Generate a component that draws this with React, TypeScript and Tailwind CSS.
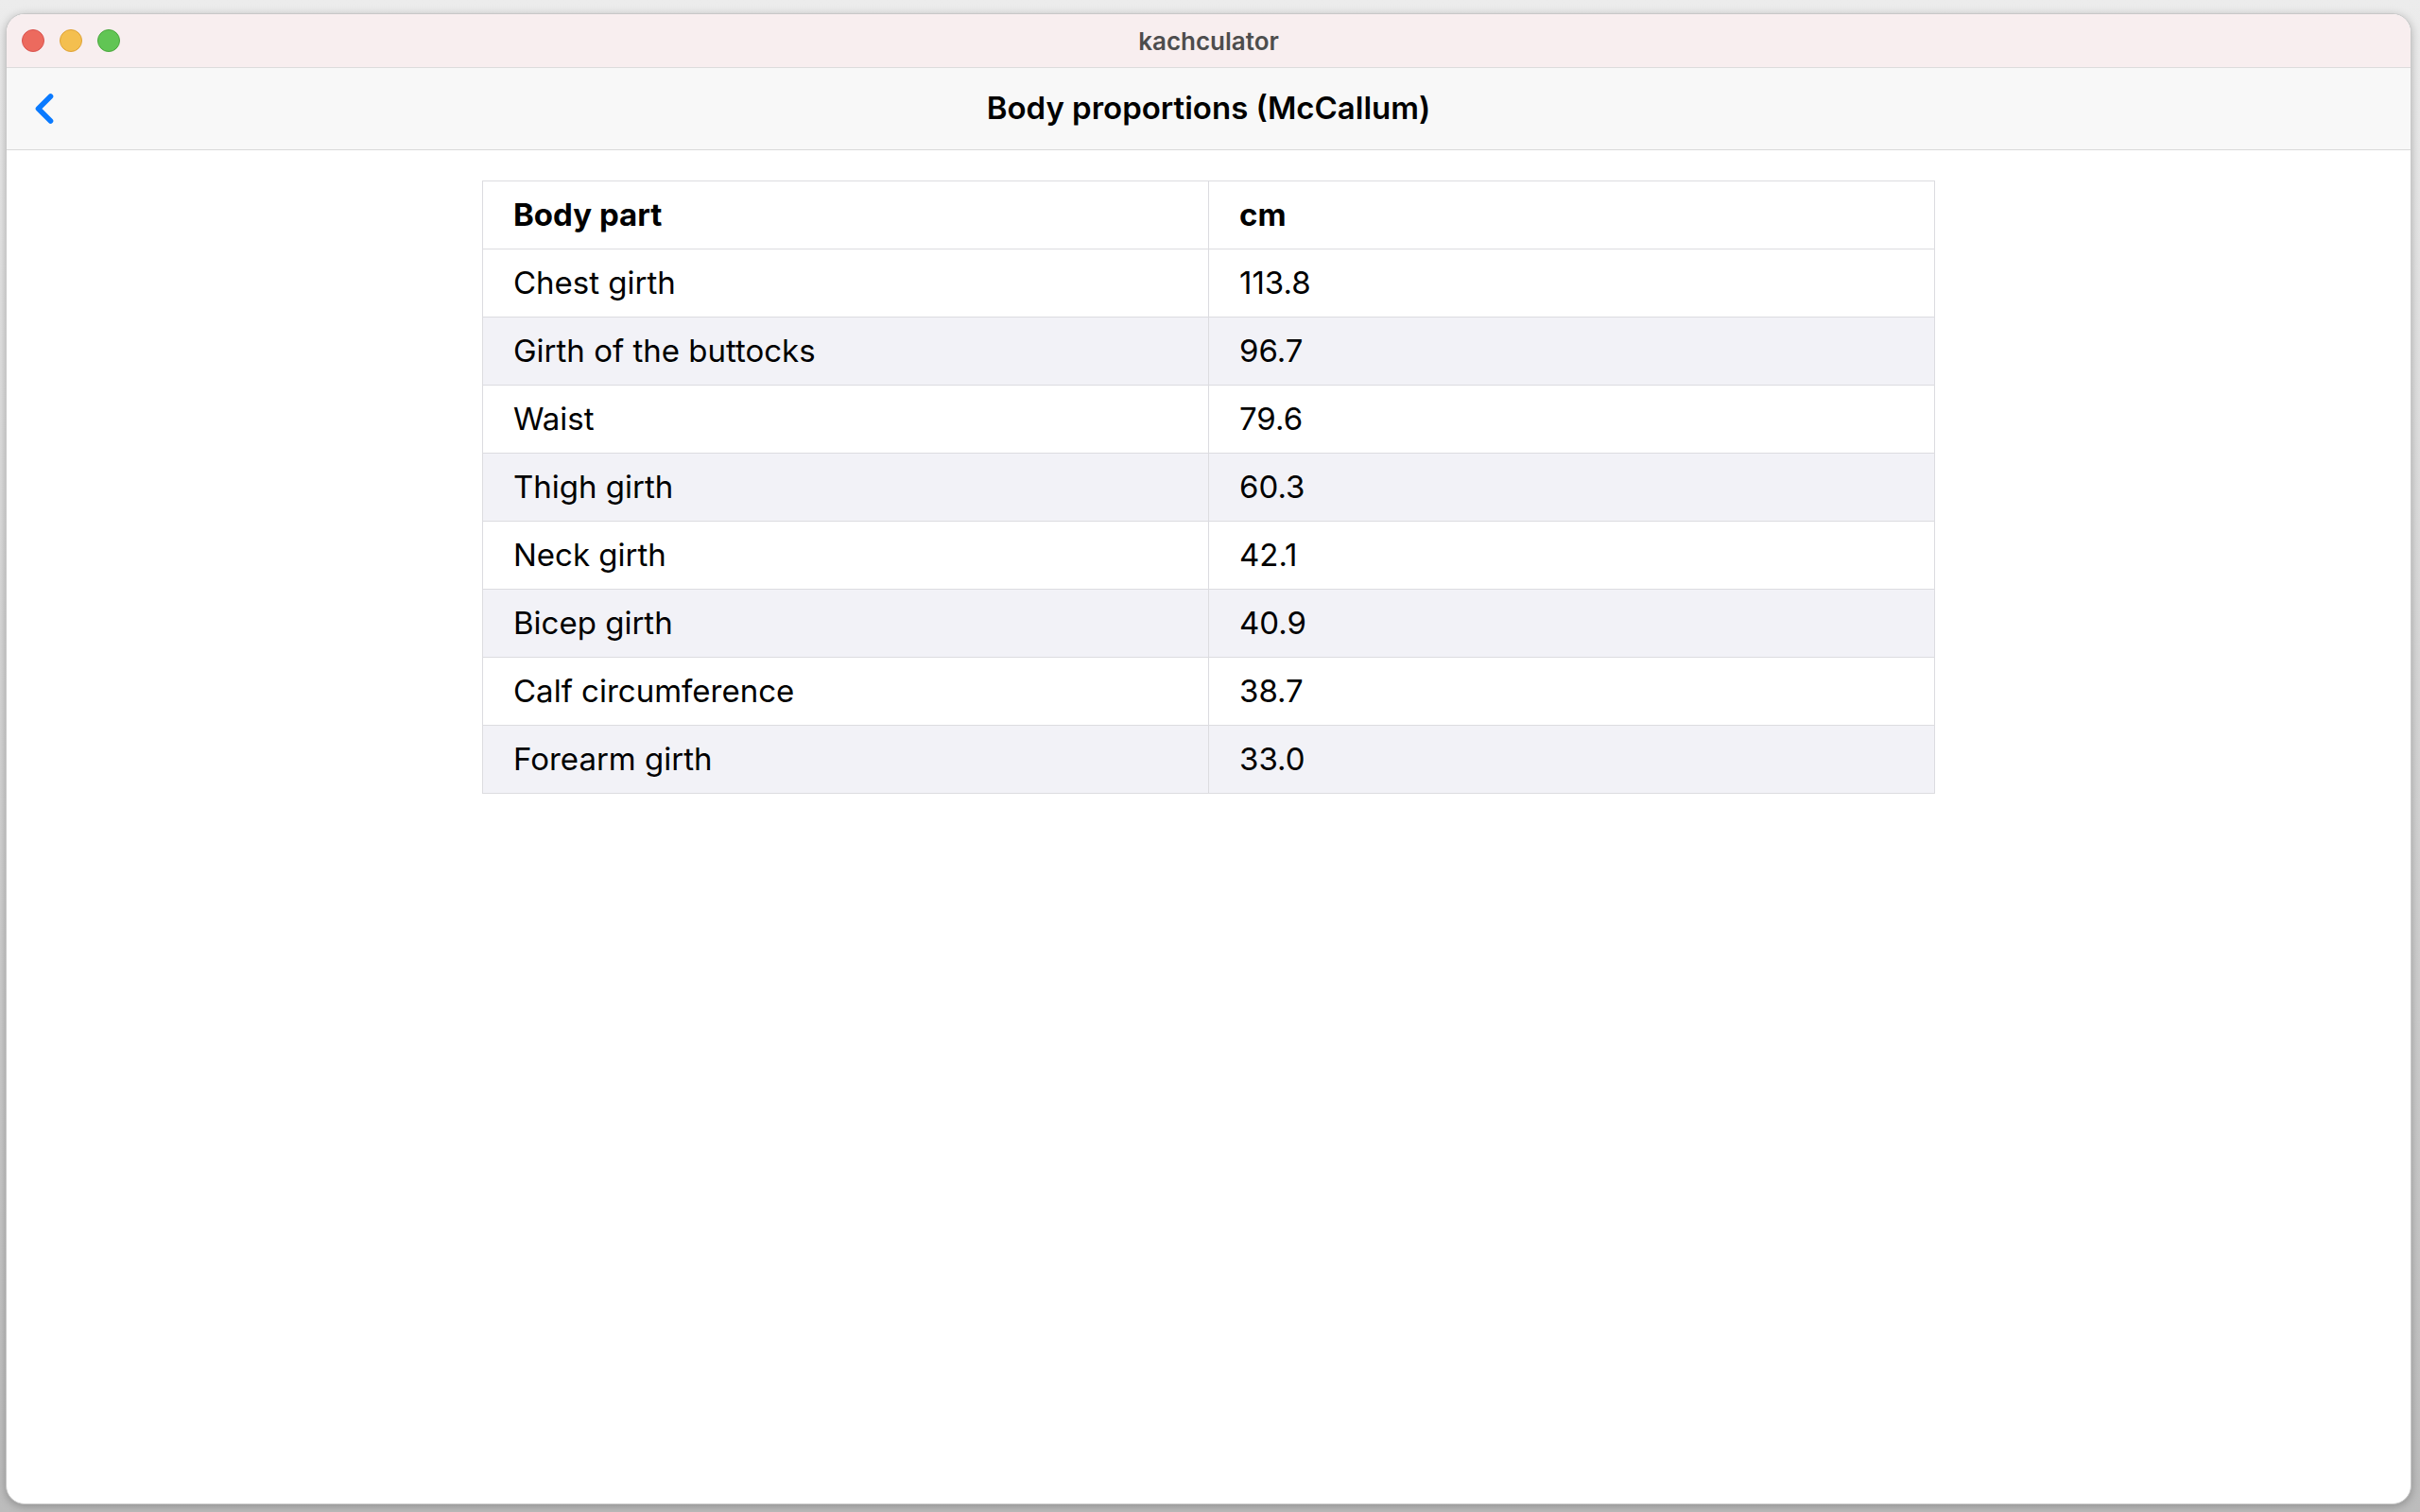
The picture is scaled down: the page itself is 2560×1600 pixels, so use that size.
import { ChevronLeft } from "lucide-react";

const rows: [string, string][] = [
  ["Chest girth", "113.8"],
  ["Girth of the buttocks", "96.7"],
  ["Waist", "79.6"],
  ["Thigh girth", "60.3"],
  ["Neck girth", "42.1"],
  ["Bicep girth", "40.9"],
  ["Calf circumference", "38.7"],
  ["Forearm girth", "33.0"],
];

function TrafficLights() {
  return (
    <div className="flex items-center gap-4">
      <span className="h-6 w-6 rounded-full border border-[#d9534f] bg-[#ec6a5e]" />
      <span className="h-6 w-6 rounded-full border border-[#dea236] bg-[#f4bf4f]" />
      <span className="h-6 w-6 rounded-full border border-[#4aa63d] bg-[#61c554]" />
    </div>
  );
}

export default function App() {
  return (
    <div className="flex h-[1600px] w-[2560px] bg-gradient-to-b from-[#ececec] to-[#bcbcbc] pb-2 pl-[6px] pr-[9px] pt-[14px] font-['Inter','Noto_Sans',sans-serif]">
      <div className="flex flex-1 flex-col overflow-hidden rounded-[20px] border border-[#c8c8c8] bg-white shadow-[0_2px_10px_rgba(0,0,0,0.25)]">
        <div className="relative flex h-[57px] shrink-0 items-center justify-center border-b border-[#dcdcdc] bg-[#f8eeef]">
          <div className="absolute left-[16px] top-[16px]">
            <TrafficLights />
          </div>
          <span className="text-[26px] font-semibold text-[#4d4d4d]">kachculator</span>
        </div>

        <div className="relative flex h-[87px] shrink-0 items-center justify-center border-b border-[#d9d9d9] bg-[#f8f8f8]">
          <ChevronLeft
            className="absolute left-[14px] top-[17px] h-[52px] w-[52px] text-[#0a7aff]"
            strokeWidth={2.6}
          />
          <h1 className="text-[33px] font-semibold text-black">Body proportions (McCallum)</h1>
        </div>

        <div className="flex flex-1 items-start justify-center pt-[32px]">
          <table className="w-[1537px] table-fixed border-collapse border border-[#dcdce0] text-[33px] text-black">
            <thead>
              <tr className="h-[72px]">
                <th className="border border-[#dcdce0] px-[32px] py-0 text-left font-bold">Body part</th>
                <th className="border border-[#dcdce0] px-[32px] py-0 text-left font-bold">cm</th>
              </tr>
            </thead>
            <tbody>
              {rows.map(([part, value], i) => (
                <tr key={part} className={i % 2 === 1 ? "h-[72px] bg-[#f2f2f7]" : "h-[72px] bg-white"}>
                  <td className="border border-[#dcdce0] px-[32px] py-0">{part}</td>
                  <td className="border border-[#dcdce0] px-[32px] py-0">{value}</td>
                </tr>
              ))}
            </tbody>
          </table>
        </div>
      </div>
    </div>
  );
}
